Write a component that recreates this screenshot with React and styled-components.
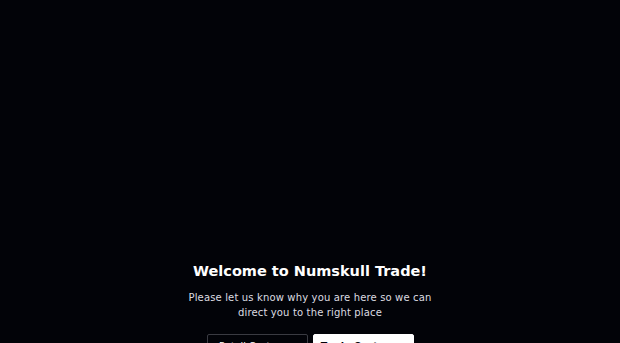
import React from "react";
import styled, { createGlobalStyle } from "styled-components";

const GlobalStyle = createGlobalStyle`
  html, body {
    margin: 0;
    padding: 0;
    background: #020308;
    height: 100%;
    overflow: hidden;
  }
  #root {
    height: 100%;
  }
`;

const Page = styled.main`
  height: 100vh;
  background: #020308;
  color: #ffffff;
  font-family: "DejaVu Sans", sans-serif;
  display: flex;
  flex-direction: column;
  align-items: center;
  padding-top: 259px;
  box-sizing: border-box;
`;

const Title = styled.h1`
  margin: 0;
  font-size: 14.5px;
  font-weight: 700;
  letter-spacing: 0;
  line-height: 24px;
`;

const Lead = styled.p`
  margin: 8px 0 0;
  width: 270px;
  text-align: center;
  font-size: 10px;
  line-height: 14.5px;
  letter-spacing: 0.15px;
  color: #dcdce0;
`;

const Actions = styled.div`
  display: flex;
  gap: 5px;
  margin-top: 14px;
`;

const ChoiceButton = styled.button`
  width: 101px;
  padding: 4px 0 10px;
  border-radius: 2px;
  font-family: inherit;
  font-size: 9.5px;
  line-height: 14px;
  font-weight: ${(p) => (p.$primary ? 700 : 400)};
  white-space: nowrap;
  cursor: pointer;
  border: 1px solid ${(p) => (p.$primary ? "#ffffff" : "#3a3b42")};
  background: ${(p) => (p.$primary ? "#ffffff" : "#020308")};
  color: ${(p) => (p.$primary ? "#020308" : "#ffffff")};
`;

export default function App() {
  return (
    <>
      <GlobalStyle />
      <Page>
        <Title>Welcome to Numskull Trade!</Title>
        <Lead>
          Please let us know why you are here so we can direct you to the right
          place
        </Lead>
        <Actions>
          <ChoiceButton>Retail Customer</ChoiceButton>
          <ChoiceButton $primary>Trade Customer</ChoiceButton>
        </Actions>
      </Page>
    </>
  );
}
